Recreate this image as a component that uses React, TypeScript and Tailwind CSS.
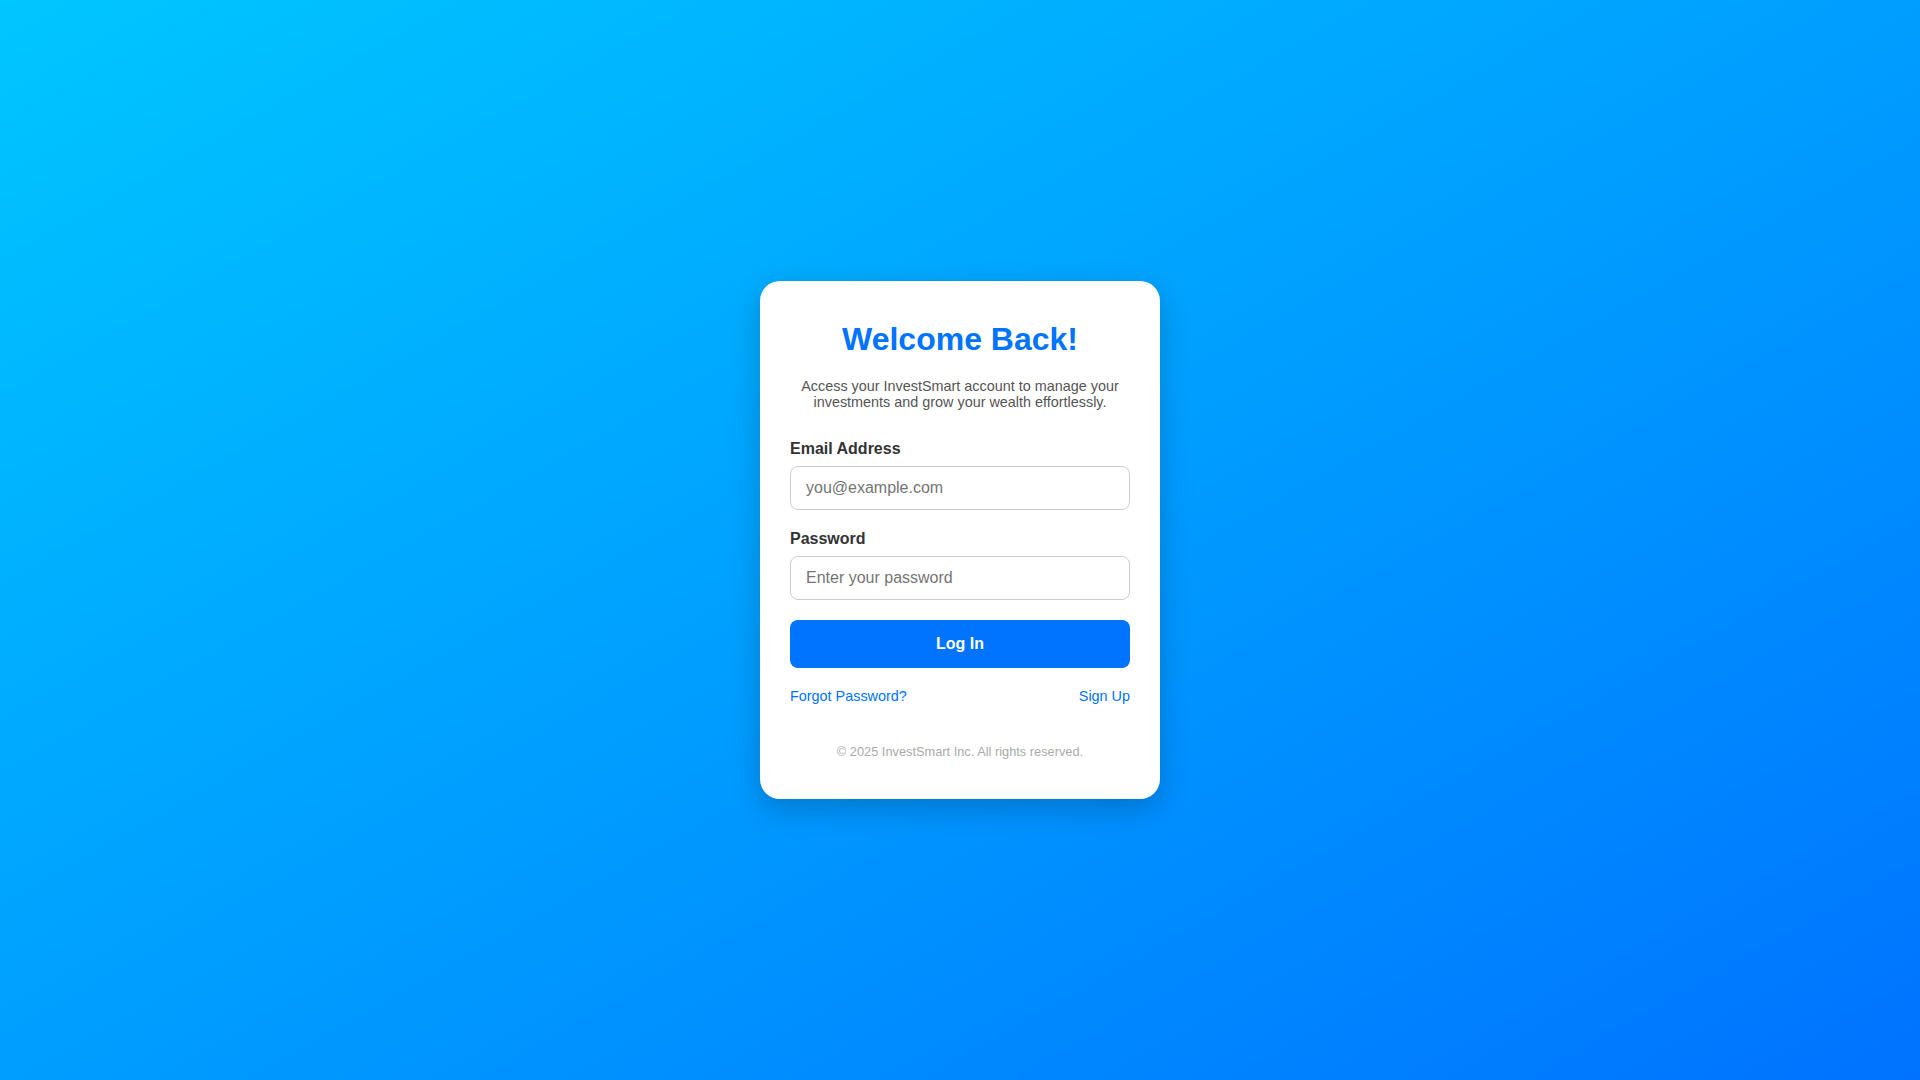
export default function App() {
  return (
    <div
      className="flex h-screen w-full items-center justify-center bg-gradient-to-br from-[#00c6ff] to-[#0072ff]"
      style={{ fontFamily: '"Liberation Sans", Arial, sans-serif' }}
    >
      <div className="w-[400px] rounded-[20px] bg-white px-[30px] pb-[39px] pt-[40px] text-center leading-[1.15] shadow-[0_10px_30px_rgba(0,0,0,0.2)]">
        <h1 className="mb-5 text-[32px] font-bold leading-[1.15] text-[#0073ff]">Welcome Back!</h1>
        <p className="mb-[29px] text-[14.4px] leading-[1.15] text-[#555]">
          Access your InvestSmart account to manage your investments and grow your wealth
          effortlessly.
        </p>

        <form className="text-left" onSubmit={(e) => e.preventDefault()}>
          <div className="mb-5">
            <label className="mb-2 block text-[16px] font-bold leading-[1.15] text-[#333]">
              Email Address
            </label>
            <input
              type="email"
              placeholder="you@example.com"
              className="block h-[43.5px] w-full rounded-lg border border-[#ccc] px-[15px] text-[16px] text-[#333] placeholder:text-[#757575] outline-none"
            />
          </div>
          <div className="mb-5">
            <label className="mb-2 block text-[16px] font-bold leading-[1.15] text-[#333]">
              Password
            </label>
            <input
              type="password"
              placeholder="Enter your password"
              className="block h-[43.5px] w-full rounded-lg border border-[#ccc] px-[15px] text-[16px] text-[#333] placeholder:text-[#757575] outline-none"
            />
          </div>
          <button
            type="submit"
            className="block h-12 w-full rounded-lg bg-[#0073ff] text-[16px] font-bold text-white"
          >
            Log In
          </button>
        </form>

        <div className="mt-5 flex justify-between text-[14.4px] leading-[1.15]">
          <a href="#" className="text-[#0073ff]">Forgot Password?</a>
          <a href="#" className="text-[#0073ff]">Sign Up</a>
        </div>

        <p className="mt-[41px] text-[12.8px] leading-[1.15] text-[#aaa]">
          © 2025 InvestSmart Inc. All rights reserved.
        </p>
      </div>
    </div>
  );
}
